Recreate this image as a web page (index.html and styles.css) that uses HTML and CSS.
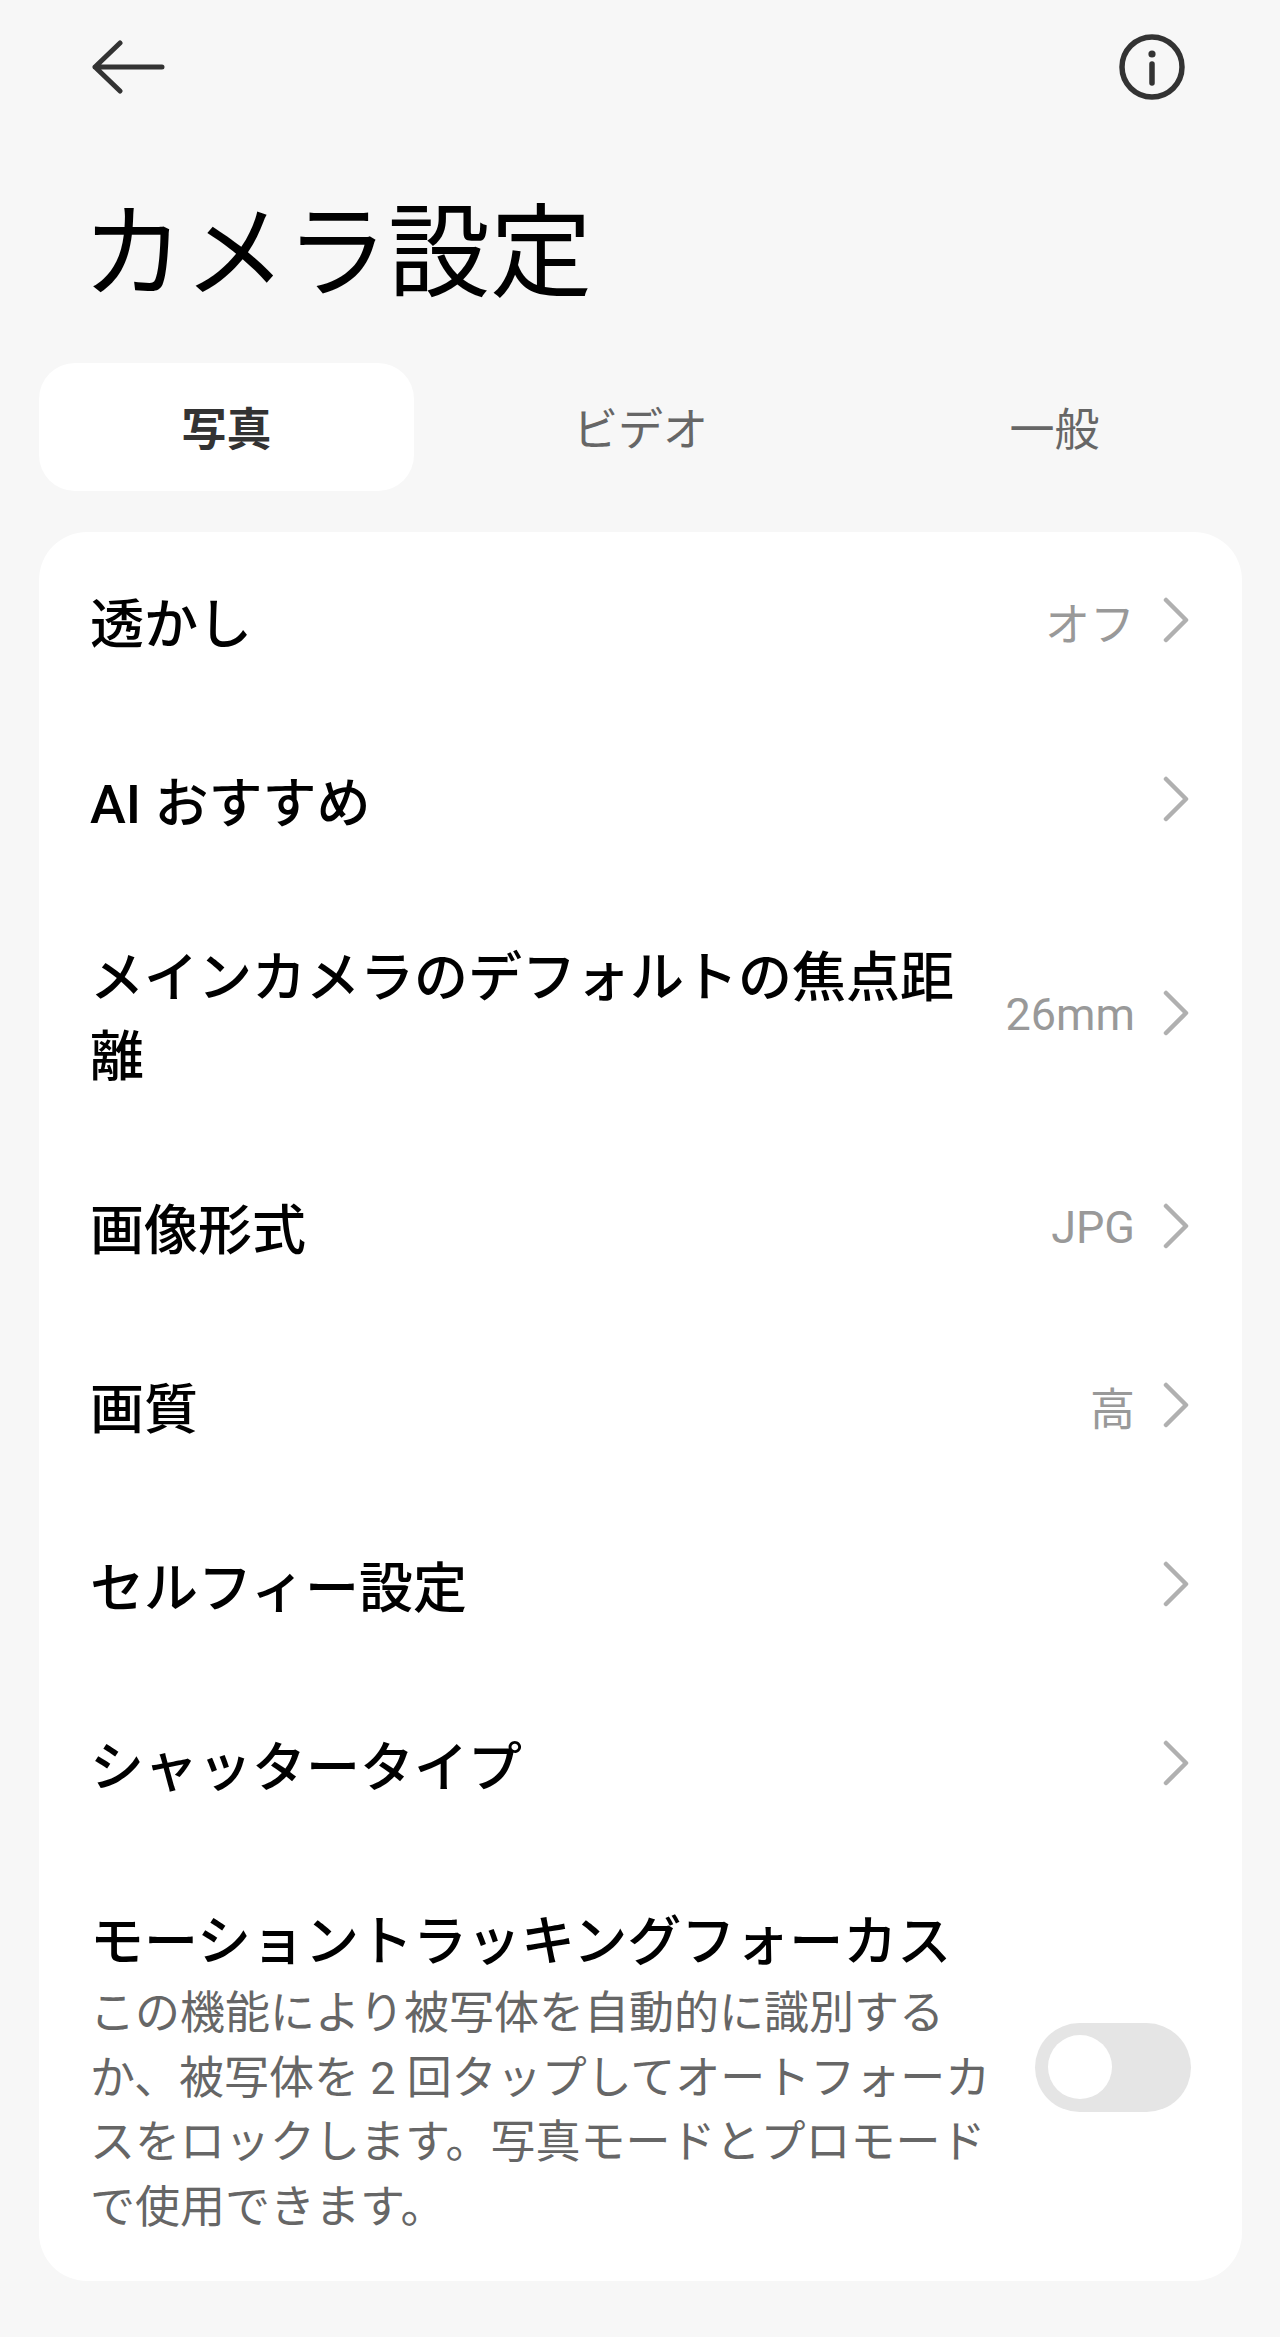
FILE: index.html
```html
<!DOCTYPE html>
<html lang="ja">
<head>
    <meta charset="UTF-8">
    <meta name="viewport" content="width=device-width, initial-scale=1.0">
    <title>カメラ設定</title>
    <link rel="stylesheet" href="styles.css">
</head>
<body>
    <header class="topbar">
        <svg class="back-icon" viewBox="0 0 74 54" aria-hidden="true">
            <path d="M28 3 L3 27 L28 51 M3 27 H70" />
        </svg>
        <svg class="info-icon" viewBox="0 0 66 66" aria-hidden="true">
            <circle class="ring" cx="33" cy="33" r="30" />
            <circle class="dot" cx="33" cy="20" r="3.6" />
            <path class="bar" d="M33 30 V49" />
        </svg>
    </header>

    <h1 class="page-title">カメラ設定</h1>

    <div class="tabs">
        <div class="tab active">写真</div>
        <div class="tab">ビデオ</div>
        <div class="tab">一般</div>
    </div>

    <section class="card">
        <div class="row">
            <div class="row-label">透かし</div>
            <div class="row-value">オフ</div>
            <svg class="chevron" viewBox="0 0 28 46" aria-hidden="true"><path d="M3 3 L23 23 L3 43" /></svg>
        </div>
        <div class="row">
            <div class="row-label">AI おすすめ</div>
            <svg class="chevron" viewBox="0 0 28 46" aria-hidden="true"><path d="M3 3 L23 23 L3 43" /></svg>
        </div>
        <div class="row">
            <div class="row-label">メインカメラのデフォルトの焦点距離</div>
            <div class="row-value">26mm</div>
            <svg class="chevron" viewBox="0 0 28 46" aria-hidden="true"><path d="M3 3 L23 23 L3 43" /></svg>
        </div>
        <div class="row">
            <div class="row-label">画像形式</div>
            <div class="row-value">JPG</div>
            <svg class="chevron" viewBox="0 0 28 46" aria-hidden="true"><path d="M3 3 L23 23 L3 43" /></svg>
        </div>
        <div class="row">
            <div class="row-label">画質</div>
            <div class="row-value">高</div>
            <svg class="chevron" viewBox="0 0 28 46" aria-hidden="true"><path d="M3 3 L23 23 L3 43" /></svg>
        </div>
        <div class="row">
            <div class="row-label">セルフィー設定</div>
            <svg class="chevron" viewBox="0 0 28 46" aria-hidden="true"><path d="M3 3 L23 23 L3 43" /></svg>
        </div>
        <div class="row">
            <div class="row-label">シャッタータイプ</div>
            <svg class="chevron" viewBox="0 0 28 46" aria-hidden="true"><path d="M3 3 L23 23 L3 43" /></svg>
        </div>
        <div class="row">
            <div class="row-text">
                <div class="row-label">モーショントラッキングフォーカス</div>
                <div class="row-desc">この機能により被写体を自動的に識別する<br>か、被写体を 2 回タップしてオートフォーカスをロックします。写真モードとプロモードで使用できます。</div>
            </div>
            <div class="toggle"><div class="toggle-knob"></div></div>
        </div>
    </section>
</body>
</html>
```

FILE: styles.css
```css
* {
    margin: 0;
    padding: 0;
    box-sizing: border-box;
}

body {
    font-family: Roboto, 'Noto Sans CJK JP', sans-serif;
    background: #f7f7f7;
    color: #000;
}

.topbar {
    display: flex;
    justify-content: space-between;
    align-items: center;
    height: 134px;
    padding: 0 95px 0 92px;
}

.back-icon {
    width: 74px;
    height: 54px;
    fill: none;
    stroke: #333;
    stroke-width: 5;
    stroke-linecap: round;
    stroke-linejoin: round;
}

.info-icon {
    width: 66px;
    height: 66px;
}

.info-icon .ring {
    fill: none;
    stroke: #333;
    stroke-width: 5.5;
}

.info-icon .dot {
    fill: #333;
}

.info-icon .bar {
    fill: none;
    stroke: #333;
    stroke-width: 5.5;
    stroke-linecap: round;
}

.page-title {
    margin-top: 50px;
    padding-left: 82px;
    font-size: 102px;
    font-weight: 400;
    line-height: 140px;
}

.tabs {
    display: grid;
    grid-template-columns: repeat(3, 375px);
    gap: 39px;
    margin: 39px 38px 0 39px;
}

.tab {
    height: 128px;
    line-height: 136px;
    text-align: center;
    font-size: 45px;
    color: #666;
}

.tab.active {
    background: white;
    border-radius: 36px;
    color: #333;
    font-weight: 700;
}

.card {
    margin: 41px 38px 0 39px;
    background: white;
    border-radius: 48px;
}

.row {
    display: flex;
    align-items: center;
    min-height: 179px;
    padding: 49px 51px 41px;
}

.row-label {
    flex: 1;
    margin-right: 40px;
    font-size: 54px;
    font-weight: 500;
    line-height: 79px;
}

.row-text {
    flex: 1;
    margin-right: 38px;
}

.row-text .row-label {
    margin-right: 0;
}

.row-desc {
    font-size: 45px;
    line-height: 64.6px;
    color: #666;
}

.row-value {
    margin: 0 28px 8px 0;
    font-size: 45px;
    color: #999;
}

.chevron {
    flex-shrink: 0;
    width: 28px;
    height: 46px;
    margin-bottom: 11px;
    fill: none;
    stroke: #b0b0b0;
    stroke-width: 4.5;
    stroke-linecap: round;
    stroke-linejoin: round;
}

.toggle {
    position: relative;
    flex-shrink: 0;
    width: 156px;
    height: 89px;
    margin-bottom: 8px;
    background: #e5e5e5;
    border-radius: 45px;
}

.toggle-knob {
    position: absolute;
    left: 13px;
    top: 12px;
    width: 64px;
    height: 64px;
    background: white;
    border-radius: 50%;
}
```
